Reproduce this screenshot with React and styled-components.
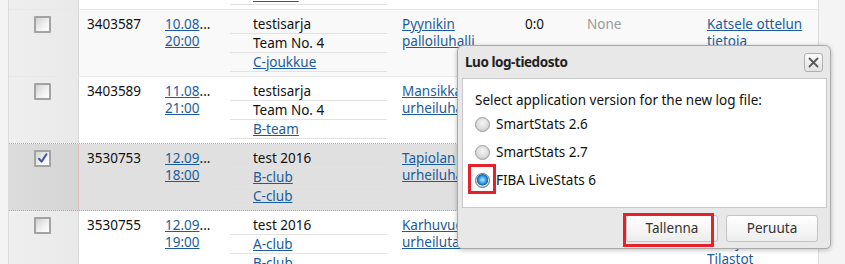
import React from "react";
import styled, { createGlobalStyle, css } from "styled-components";

const Global = createGlobalStyle`
  html, body { margin: 0; padding: 0; }
  body {
    background: #f4f4f4;
    font-family: "Noto Sans", "DejaVu Sans", sans-serif;
    font-size: 13.5px;
    color: #111;
  }
`;

const Page = styled.div`
  position: relative;
  width: 845px;
  height: 264px;
  overflow: hidden;
  background: #f4f4f4;
`;

const Table = styled.div`
  margin-left: 8px;
  width: 811px;
  box-sizing: border-box;
  border-left: 1px solid #dcdcdc;
  border-right: 1px solid #dcdcdc;
  background: #fff;
  margin-top: -57px;
`;

const Row = styled.div`
  display: grid;
  grid-template-columns: 70px 78px 73px 164px 123px 62px 120px 1fr;
  background: ${(p) => (p.$selected ? "#e0e0e0" : p.$alt ? "#f9f9f9" : "#fff")};
  border-bottom: 1px ${(p) => (p.$dottedBottom ? "dotted #a9a9a9" : "solid #e8e8e8")};
`;

const CheckCell = styled.div`
  padding: 6px 0 0 25px;
  background: ${(p) =>
    p.$selected
      ? "linear-gradient(to right, #dcdcdc, #d5d5d5)"
      : "linear-gradient(to right, #efefef, #e9e9e9)"};
  border-right: 1px solid ${(p) => (p.$selected ? "#e0bcbc" : "#d8d8d8")};
`;

const Cell = styled.div`
  padding: 6px 0 4px 8px;
  line-height: 17px;
  white-space: nowrap;
  overflow: hidden;
  color: ${(p) => (p.$muted ? "#9a9a9a" : "#111")};
`;

const TeamCell = styled.div`
  padding: 5px 7px 4px 0;
`;

const SubLine = styled.div`
  height: 18px;
  line-height: 18px;
  padding-left: 23px;
  border-bottom: 1px solid #e2e2e2;
  white-space: nowrap;
  overflow: hidden;
`;

const Link = styled.a`
  color: #1d5c9c;
  text-decoration: underline;
  cursor: pointer;
`;

const Line = styled.div``;

const Box = styled.span`
  display: block;
  width: 17px;
  height: 17px;
  box-sizing: border-box;
  border: 2px solid #a3a3a3;
  border-radius: 1px;
  background: linear-gradient(135deg, #d2d2d2 0%, #f2f2f2 60%, #ffffff 100%);
  position: relative;
`;

function Checkbox({ checked }) {
  return (
    <Box>
      {checked && (
        <svg width="13" height="13" viewBox="0 0 13 13" style={{ position: "absolute", left: 0, top: 0 }}>
          <path d="M3 6.8 L5.6 9.6 L10.4 2.2" fill="none" stroke="#3f55a8" strokeWidth="2" strokeLinecap="round" strokeLinejoin="round" />
        </svg>
      )}
    </Box>
  );
}

const rows = [
  {
    id: "3403585", d: "10.08", t: "19:00",
    team: [["testisarja", false], ["Team No. 4", false], ["A-team", true]],
    venue: ["Pyynikin", "palloiluhalli"], score: "0:0",
  },
  {
    id: "3403587", d: "10.08", t: "20:00",
    team: [["testisarja", false], ["Team No. 4", false], ["C-joukkue", true]],
    venue: ["Pyynikin", "palloiluhalli"], score: "0:0", alt: true,
  },
  {
    id: "3403589", d: "11.08", t: "21:00",
    team: [["testisarja", false], ["Team No. 4", false], ["B-team", true]],
    venue: ["Mansikkalan", "urheiluhalli"], score: "0:0", dotted: true,
  },
  {
    id: "3530753", d: "12.09", t: "18:00",
    team: [["test 2016", false], ["B-club", true], ["C-club", true]],
    venue: ["Tapiolan", "urheiluhalli"], score: "0:0", selected: true, dotted: true,
  },
  {
    id: "3530755", d: "12.09", t: "19:00",
    team: [["test 2016", false], ["A-club", true], ["B-club", true]],
    venue: ["Karhuvuoren", "urheilutalo"], score: "0:0",
  },
];

const Dialog = styled.div`
  position: absolute;
  left: 457px;
  top: 45px;
  width: 374px;
  height: 204px;
  box-sizing: border-box;
  border: 1px solid #a9a9a9;
  border-radius: 6px 6px 5px 5px;
  background: #e8e8e8;
  box-shadow: 0 1px 5px rgba(0, 0, 0, 0.25);
  display: flex;
  flex-direction: column;
`;

const TitleBar = styled.div`
  height: 32px;
  display: flex;
  align-items: center;
  justify-content: space-between;
  padding: 0 7px 0 7px;
`;

const Title = styled.div`
  font-weight: 700;
  font-size: 13.5px;
  letter-spacing: -0.45px;
  color: #222;
`;

const CloseBtn = styled.button`
  width: 19px;
  height: 19px;
  padding: 0;
  margin-top: 1px;
  border: 1px solid #b0b0b0;
  border-radius: 3px;
  background: linear-gradient(#fbfbfb, #e2e2e2);
  display: flex;
  align-items: center;
  justify-content: center;
`;

const Content = styled.div`
  margin: 0 3px 0 4px;
  height: 130px;
  box-sizing: border-box;
  border: 1px solid #c8c8c8;
  background: #fff;
  padding: 12px 12px 0 12px;
`;

const Prompt = styled.div`
  line-height: 19px;
  color: #111;
`;

const RadioRow = styled.label`
  display: flex;
  align-items: center;
  gap: 6px;
  height: 28px;
  color: #111;
`;

const RadioWrap = styled.span`
  position: relative;
  display: block;
  width: 15px;
  height: 15px;
`;

const RadioCircle = styled.span`
  display: block;
  width: 15px;
  height: 15px;
  box-sizing: border-box;
  border-radius: 50%;
  border: 1px solid #9a9a9a;
  background: radial-gradient(circle at 50% 40%, #f6f6f6 0%, #dcdcdc 55%, #bdbdbd 100%);
  ${(p) =>
    p.$checked &&
    css`
      border-color: #5a6f86;
      background: radial-gradient(circle at 50% 45%, #bfe8ff 0%, #36a3ea 35%, #1267b1 55%, #dfe6ee 62%, #aab4c0 100%);
    `}
`;

const Highlight = styled.span`
  position: absolute;
  box-sizing: border-box;
  border: 3px solid #e5222b;
  pointer-events: none;
`;

const RadioHighlight = styled(Highlight)`
  left: -7px;
  top: -9px;
  width: 28px;
  height: 30px;
`;

const Footer = styled.div`
  flex: 1;
  display: flex;
  justify-content: flex-end;
  align-items: center;
  gap: 8px;
  padding: 0 12px 0 0;
`;

const BtnWrap = styled.div`
  position: relative;
`;

const Button = styled.button`
  width: 92px;
  height: 27px;
  box-sizing: border-box;
  border: 1px solid #c4c4c4;
  border-radius: 3px;
  background: linear-gradient(#ffffff, #ededed);
  font-family: "Noto Sans", "DejaVu Sans", sans-serif;
  font-size: 13.5px;
  color: #333;
  padding: 0;
`;

const ButtonHighlight = styled(Highlight)`
  left: -3px;
  top: -2px;
  width: 91px;
  height: 34px;
`;

export default function App() {
  return (
    <>
      <Global />
      <Page>
        <Table>
          {rows.map((r) => (
            <Row key={r.id} $selected={r.selected} $alt={r.alt} $dottedBottom={r.dotted}>
              <CheckCell $selected={r.selected}>
                <Checkbox checked={r.selected} />
              </CheckCell>
              <Cell>{r.id}</Cell>
              <Cell>
                <Line>
                  <Link>{r.d}</Link>...
                </Line>
                <Line>
                  <Link>{r.t}</Link>
                </Line>
              </Cell>
              <TeamCell>
                {r.team.map(([txt, isLink], i) => (
                  <SubLine key={i}>{isLink ? <Link>{txt}</Link> : txt}</SubLine>
                ))}
              </TeamCell>
              <Cell>
                <Line>
                  <Link>{r.venue[0]}</Link>
                </Line>
                <Line>
                  <Link>{r.venue[1]}</Link>
                </Line>
              </Cell>
              <Cell>{r.score}</Cell>
              <Cell $muted>None</Cell>
              <Cell>
                <Line>
                  <Link>Katsele ottelun</Link>
                </Line>
                <Line>
                  <Link>tietoja</Link>
                </Line>
                <Line>
                  <Link>Tilastot</Link>
                </Line>
              </Cell>
            </Row>
          ))}
        </Table>
        <Dialog>
          <TitleBar>
            <Title>Luo log-tiedosto</Title>
            <CloseBtn aria-label="close">
              <svg width="11" height="11" viewBox="0 0 11 11">
                <path d="M1.5 1.5 L9.5 9.5 M9.5 1.5 L1.5 9.5" stroke="#5a5a5a" strokeWidth="1.8" strokeLinecap="round" />
              </svg>
            </CloseBtn>
          </TitleBar>
          <Content>
            <Prompt>Select application version for the new log file:</Prompt>
            <RadioRow>
              <RadioWrap>
                <RadioCircle />
              </RadioWrap>
              SmartStats 2.6
            </RadioRow>
            <RadioRow>
              <RadioWrap>
                <RadioCircle />
              </RadioWrap>
              SmartStats 2.7
            </RadioRow>
            <RadioRow>
              <RadioWrap>
                <RadioCircle $checked />
                <RadioHighlight />
              </RadioWrap>
              FIBA LiveStats 6
            </RadioRow>
          </Content>
          <Footer>
            <BtnWrap>
              <Button>Tallenna</Button>
              <ButtonHighlight />
            </BtnWrap>
            <BtnWrap>
              <Button>Peruuta</Button>
            </BtnWrap>
          </Footer>
        </Dialog>
      </Page>
    </>
  );
}
